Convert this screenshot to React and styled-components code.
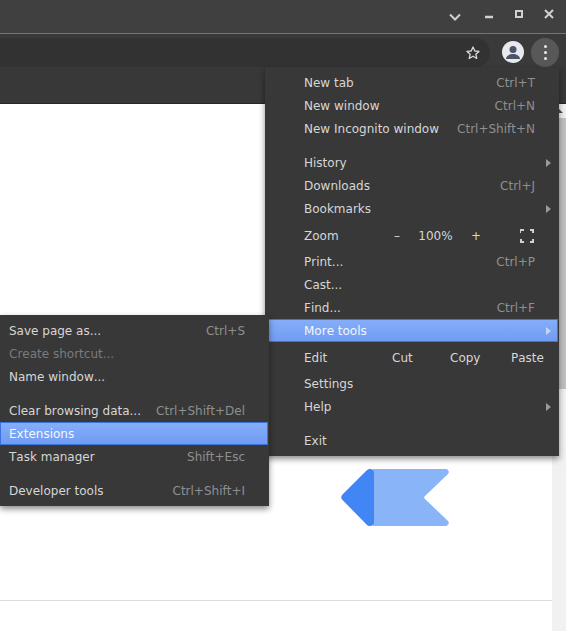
import React from 'react';
import styled, { createGlobalStyle } from 'styled-components';

const GlobalStyle = createGlobalStyle`
  html, body {
    margin: 0;
    padding: 0;
    background: #ffffff;
  }
`;

const Screen = styled.div`
  position: relative;
  width: 566px;
  height: 631px;
  overflow: hidden;
  display: flex;
  flex-direction: column;
  font-family: "DejaVu Sans", sans-serif;
  font-size: 12px;
  font-kerning: none;
  background: #ffffff;
`;

const TitleBar = styled.div`
  height: 33px;
  flex: none;
  box-sizing: content-box;
  background: #404040;
  border-bottom: 1px solid #757575;
  display: flex;
  align-items: flex-start;
  justify-content: flex-end;
  padding-right: 10px;
  gap: 16px;
`;

const WindowIcon = styled.svg`
  width: 14px;
  height: 14px;
  flex: none;
  display: block;
  fill: none;
  stroke: #d0d0d0;
  margin-top: ${(p) => p.$top || 0}px;
  margin-right: ${(p) => p.$right || 0}px;
`;

const Toolbar = styled.div`
  height: 33px;
  flex: none;
  background: #3a3a3a;
  display: flex;
  align-items: flex-end;
`;

const Omnibox = styled.div`
  flex: 1;
  height: 29px;
  background: #323232;
  border-radius: 0 15px 15px 0;
  display: flex;
  align-items: center;
  justify-content: flex-end;
  padding-right: 9px;
  margin-right: 12px;
`;

const Avatar = styled.div`
  width: 22px;
  height: 22px;
  flex: none;
  border-radius: 50%;
  background: #e8eaed;
  overflow: hidden;
  margin: 0 7px 4px 0;
`;

const KebabButton = styled.div`
  width: 28px;
  height: 29px;
  flex: none;
  margin-right: 7px;
  border-radius: 50%;
  background: #585858;
  display: flex;
  flex-direction: column;
  align-items: center;
  justify-content: center;
  gap: 3px;
`;

const Dot = styled.span`
  width: 3px;
  height: 3px;
  border-radius: 50%;
  background: #e8eaed;
`;

const BookmarkBar = styled.div`
  height: 36px;
  flex: none;
  background: #383838;
  border-bottom: 1px solid #262626;
`;

const Page = styled.div`
  flex: 1;
  display: flex;
  min-height: 0;
`;

const PageBody = styled.div`
  flex: 1;
  display: flex;
  flex-direction: column;
`;

const LogoArea = styled.div`
  height: 497px;
  flex: none;
  box-sizing: border-box;
  padding: 365px 0 0 341px;
  border-bottom: 1px solid #dadce0;
`;

const Scrollbar = styled.div`
  width: 14px;
  flex: none;
  display: flex;
  flex-direction: column;
  background: #f1f1f1;
`;

const ScrollUp = styled.div`
  height: 14px;
  flex: none;
  display: flex;
  align-items: center;
  justify-content: center;
  &::before {
    content: '';
    border-left: 4px solid transparent;
    border-right: 4px solid transparent;
    border-bottom: 4px solid #505050;
  }
`;

const ScrollThumb = styled.div`
  height: 271px;
  flex: none;
  background: #c1c1c1;
`;

const Menu = styled.div`
  position: absolute;
  left: ${(p) => p.$left}px;
  top: ${(p) => p.$top}px;
  width: ${(p) => p.$width}px;
  box-sizing: border-box;
  padding: 4px 0;
  background: #383838;
  box-shadow: 0 3px 6px rgba(0, 0, 0, 0.45);
`;

const Row = styled.div`
  height: 23px;
  box-sizing: border-box;
  display: flex;
  align-items: center;
  padding: 0 ${(p) => p.$pr}px 0 ${(p) => p.$pl}px;
  color: ${(p) => (p.$disabled ? '#7b7b7b' : p.$active ? '#f4f6fb' : '#d6d6d6')};
  position: relative;
  ${(p) =>
    p.$active &&
    `
    margin-right: 1px;
    background: linear-gradient(to bottom, #86aef9, #6f9bf3);
    box-shadow: inset 0 0 0 1px #3f73dc;
  `}
`;

const TallRow = styled(Row)`
  height: 30px;
  padding-top: 2px;
`;

const Label = styled.span`
  flex: 1;
  white-space: nowrap;
`;

const Shortcut = styled.span`
  color: #8f8f8f;
  white-space: nowrap;
`;

const Arrow = styled.span`
  position: absolute;
  right: ${(p) => (p.$active ? 7 : 8)}px;
  top: 50%;
  margin-top: -4px;
  width: 0;
  height: 0;
  border-left: 5px solid ${(p) => (p.$active ? '#c7d6f5' : '#9a9a9a')};
  border-top: 4px solid transparent;
  border-bottom: 4px solid transparent;
`;

const Separator = styled.div`
  height: 11px;
`;

const ZoomGroup = styled.div`
  display: flex;
  align-items: center;
  width: 87px;
  justify-content: space-between;
  margin-right: 39px;
`;

const EditAction = styled.span`
  width: ${(p) => p.$w}px;
  flex: none;
  white-space: nowrap;
`;

const Logo = styled.svg`
  width: 108px;
  height: 57px;
  display: block;
`;

const mainMenu = [
  { label: 'New tab', shortcut: 'Ctrl+T' },
  { label: 'New window', shortcut: 'Ctrl+N' },
  { label: 'New Incognito window', shortcut: 'Ctrl+Shift+N' },
  { sep: true },
  { label: 'History', arrow: true },
  { label: 'Downloads', shortcut: 'Ctrl+J' },
  { label: 'Bookmarks', arrow: true },
  { zoom: true },
  { label: 'Print...', shortcut: 'Ctrl+P' },
  { label: 'Cast...' },
  { label: 'Find...', shortcut: 'Ctrl+F' },
  { label: 'More tools', arrow: true, active: true },
  { edit: true },
  { label: 'Settings' },
  { label: 'Help', arrow: true },
  { sep: true },
  { label: 'Exit' },
];

const toolsMenu = [
  { label: 'Save page as...', shortcut: 'Ctrl+S' },
  { label: 'Create shortcut...', disabled: true },
  { label: 'Name window...' },
  { sep: true },
  { label: 'Clear browsing data...', shortcut: 'Ctrl+Shift+Del' },
  { label: 'Extensions', active: true },
  { label: 'Task manager', shortcut: 'Shift+Esc' },
  { sep: true },
  { label: 'Developer tools', shortcut: 'Ctrl+Shift+I' },
];

function MenuRows({ items, pl, pr }) {
  return items.map((item, i) => {
    if (item.sep) return <Separator key={i} />;
    if (item.zoom) {
      return (
        <TallRow key={i} $pl={pl} $pr={pr + 1}>
          <Label>Zoom</Label>
          <ZoomGroup>
            <span>–</span>
            <span>100%</span>
            <span>+</span>
          </ZoomGroup>
          <WindowIcon viewBox="0 0 14 14" strokeWidth="2">
            <path d="M0 4V1H4M10 1H13V4M13 10V13H10M4 13H1V10" />
          </WindowIcon>
        </TallRow>
      );
    }
    if (item.edit) {
      return (
        <TallRow key={i} $pl={pl} $pr={15}>
          <Label>Edit</Label>
          <EditAction $w={58}>Cut</EditAction>
          <EditAction $w={61}>Copy</EditAction>
          <EditAction $w={33}>Paste</EditAction>
        </TallRow>
      );
    }
    return (
      <Row
        key={i}
        $pl={pl}
        $pr={item.active ? pr - 1 : pr}
        $active={item.active}
        $disabled={item.disabled}
      >
        <Label>{item.label}</Label>
        {item.shortcut && <Shortcut>{item.shortcut}</Shortcut>}
        {item.arrow && <Arrow $active={item.active} />}
      </Row>
    );
  });
}

export default function App() {
  return (
    <Screen>
      <GlobalStyle />
      <TitleBar>
        <WindowIcon viewBox="0 0 14 14" strokeWidth="2" $top={7} $right={4}>
          <path d="M2 7.5L7 12.5L12 7.5" />
        </WindowIcon>
        <WindowIcon viewBox="0 0 14 14" strokeWidth="2.5" $top={7}>
          <path d="M3 10H11" />
        </WindowIcon>
        <WindowIcon viewBox="0 0 14 14" strokeWidth="2" $top={7}>
          <rect x="4" y="4" width="6" height="6" />
        </WindowIcon>
        <WindowIcon viewBox="0 0 14 14" strokeWidth="2" $top={7}>
          <path d="M3 3L11 11M11 3L3 11" />
        </WindowIcon>
      </TitleBar>
      <Toolbar>
        <Omnibox>
          <svg width="16" height="16" viewBox="0 0 24 24" fill="none" stroke="#d8d8d8" strokeWidth="2" strokeLinejoin="round">
            <path d="M12 3l2.700 6 6.300.6-4.800 4.200 1.500 6.400L12 16.800l-5.700 3.400 1.500-6.400L3 9.600 9.300 9z" />
          </svg>
        </Omnibox>
        <Avatar>
          <svg width="22" height="22" viewBox="0 0 22 22" fill="#4a5568">
            <circle cx="11" cy="8.500" r="3.500" />
            <path d="M4 18c0-3.500 4-5 7-5s7 1.500 7 5z" />
          </svg>
        </Avatar>
        <KebabButton>
          <Dot />
          <Dot />
          <Dot />
        </KebabButton>
      </Toolbar>
      <BookmarkBar />
      <Page>
        <PageBody>
          <LogoArea>
            <Logo viewBox="0 0 108 57">
              <path
                d="M32 0H105a3 3 0 0 1 2 5L84 27a2 2 0 0 0 0 3l23 22a3 3 0 0 1-2 5H32z"
                fill="#8ab4f8"
              />
              <path
                d="M29 0a4 4 0 0 1 4 4V53a4 4 0 0 1-4 4c-1.500 0-2.500-.6-3.500-1.600L1.500 31a4 4 0 0 1 0-5.500L25.500 1.600C26.500.6 27.500 0 29 0z"
                fill="#4285f4"
              />
            </Logo>
          </LogoArea>
        </PageBody>
        <Scrollbar>
          <ScrollUp />
          <ScrollThumb />
        </Scrollbar>
      </Page>
      <Menu $left={265} $top={67} $width={294}>
        <MenuRows items={mainMenu} pl={39} pr={24} />
      </Menu>
      <Menu $left={0} $top={315} $width={269}>
        <MenuRows items={toolsMenu} pl={9} pr={24} />
      </Menu>
    </Screen>
  );
}
